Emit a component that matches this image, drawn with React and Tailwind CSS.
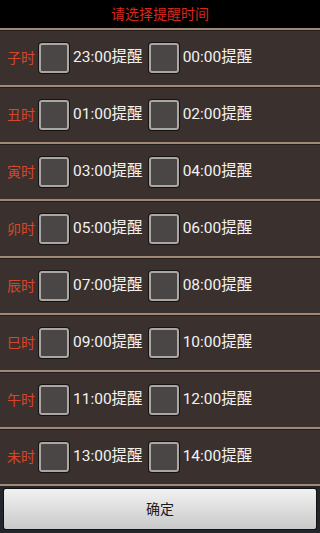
import React from 'react';

const rows = [
    ['子时', '23:00', '00:00'],
    ['丑时', '01:00', '02:00'],
    ['寅时', '03:00', '04:00'],
    ['卯时', '05:00', '06:00'],
    ['辰时', '07:00', '08:00'],
    ['巳时', '09:00', '10:00'],
    ['午时', '11:00', '12:00'],
    ['未时', '13:00', '14:00'],
];

const font = { fontFamily: 'Roboto, "Noto Sans CJK SC", sans-serif' };

// unchecked box, android holo-ish
const Box = () => (
    <div className="w-[30px] h-[30px] shrink-0 rounded-[3px] border-2 border-[#a9a6a4] bg-[#4a4646] shadow-[0_0_0_1px_#141212]" />
);

const Row = ({ label, a, b }) => (
    <div className="h-[57px] flex items-center border-t-2 border-[#a08877] bg-[#3a312e] shadow-[inset_0_1px_0_#221d1b] pl-[7px]">
        <span className="text-[14px] text-[#d4472c] w-[28px] leading-none">{label}</span>
        <div className="ml-[4px]"><Box /></div>
        <span className="ml-[4px] text-[15.5px] text-[#f2f2f2] leading-none">{a}提醒</span>
        <div className="ml-[6px]"><Box /></div>
        <span className="ml-[4px] text-[15.5px] text-[#f2f2f2] leading-none">{b}提醒</span>
    </div>
);

export default function App() {
    return (
        <div className="w-[320px] h-[533px] bg-[#23262a] flex flex-col overflow-hidden" style={font}>
            {/* title */}
            <div className="h-[29px] bg-black flex items-center justify-center">
                <span className="text-[14px] text-[#d6281d]">请选择提醒时间</span>
            </div>

            <div className="flex flex-col border-b-2 border-[#a08877]">
                {rows.map(([label, a, b]) => (
                    <Row key={label} label={label} a={a} b={b} />
                ))}
            </div>

            <div className="flex-1 px-[4px] pt-[3px] pb-[4px]">
                <button className="w-full h-[40px] rounded-[2px] bg-gradient-to-b from-[#f2f2f2] to-[#c9c9c9] text-[14px] text-[#1a1a1a] shadow-[0_0_0_1px_#111]">
                    确定
                </button>
            </div>
        </div>
    );
}
